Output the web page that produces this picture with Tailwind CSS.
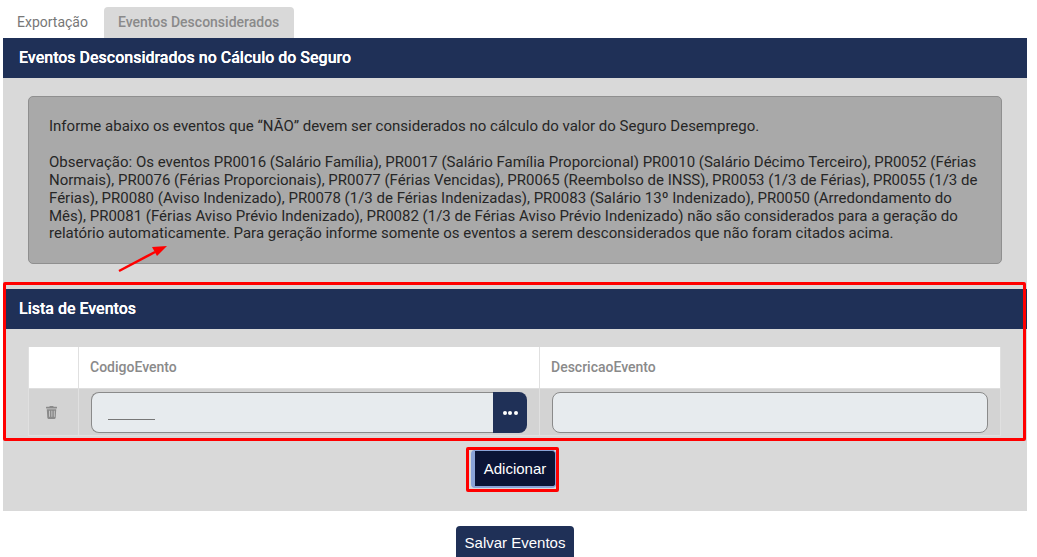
<!DOCTYPE html>
<html lang="pt"><head><meta charset="utf-8"><script src="https://cdn.jsdelivr.net/npm/@tailwindcss/browser@4"></script></head>
<body class="bg-white font-['Roboto',sans-serif] overflow-hidden">
<div class="relative w-[1037px] h-[557px] overflow-hidden pl-[3px]">
  <div class="flex h-[38px] items-end pl-px text-[14px]">
    <div class="h-[31px] px-[13px] flex items-center text-[#777]">Exportação</div>
    <div class="h-[31px] w-[190px] ml-[3px] px-[14px] flex items-center rounded-t-[4px] bg-[#d9d9d9] text-[#8a8a8a] font-medium">Eventos Desconsiderados</div>
  </div>
  <div class="w-[1024px] h-[473px] bg-[#d9d9d9]">
    <div class="h-[40px] bg-[#1f3057] text-white font-medium text-[16px] [text-shadow:0_0_0.6px_white] flex items-center pl-[16px]">Eventos Desconsidrados no Cálculo do Seguro</div>
    <div class="mt-[18px] mx-[25px] h-[168px] w-[974px] rounded-[5px] border border-[#8f8f8f] bg-[#a9a9a9] px-[20px] pt-[21px] text-[15px] leading-[17.800px] text-[#262626]">
      <p>Informe abaixo os eventos que “NÃO” devem ser considerados no cálculo do valor do Seguro Desemprego.</p>
      <p class="mt-[18.500px]">Observação: Os eventos PR0016 (Salário Família), PR0017 (Salário Família Proporcional) PR0010 (Salário Décimo Terceiro), PR0052 (Férias Normais), PR0076 (Férias Proporcionais), PR0077 (Férias Vencidas), PR0065 (Reembolso de INSS), PR0053 (1/3 de Férias), PR0055 (1/3 de Férias), PR0080 (Aviso Indenizado), PR0078 (1/3 de Férias Indenizadas), PR0083 (Salário 13º Indenizado), PR0050 (Arredondamento do Mês), PR0081 (Férias Aviso Prévio Indenizado), PR0082 (1/3 de Férias Aviso Prévio Indenizado) não são considerados para a geração do relatório automaticamente. Para geração informe somente os eventos a serem desconsiderados que não foram citados acima.</p>
    </div>
    <div class="mt-[25px] h-[40px] bg-[#1f3057] text-white font-medium text-[16px] [text-shadow:0_0_0.6px_white] flex items-center pl-[16px]">Lista de Eventos</div>
    <div class="mt-[18px] ml-[25px] w-[973px] border-x border-b border-[#e0e0e0] text-[14px]">
      <div class="grid grid-cols-[50px_461px_1fr] h-[42px] bg-white text-[#8a8a8a] font-medium border-b border-[#dedede]">
        <div class="border-r border-[#e0e0e0]"></div>
        <div class="border-r border-[#e0e0e0] pl-[11px] flex items-center">CodigoEvento</div>
        <div class="pl-[11px] flex items-center">DescricaoEvento</div>
      </div>
      <div class="grid grid-cols-[50px_461px_1fr] h-[46px] bg-[#d3d3d3]">
        <div class="border-r border-[#e0e0e0] flex items-center justify-center pr-[5px]">
          <svg class="w-[11px] h-[13px]" viewBox="0 0 448 512" fill="#8a8a8a" preserveAspectRatio="none"><path d="M432 32H312l-9.400-18.700A24 24 0 0 0 281.100 0H166.800a23.700 23.700 0 0 0-21.400 13.300L136 32H16A16 16 0 0 0 0 48v32a16 16 0 0 0 16 16h416a16 16 0 0 0 16-16V48a16 16 0 0 0-16-16zM53.200 467a48 48 0 0 0 47.900 45h245.800a48 48 0 0 0 47.900-45L416 128H32zM320 192a16 16 0 0 1 32 0v224a16 16 0 0 1-32 0zm-96 0a16 16 0 0 1 32 0v224a16 16 0 0 1-32 0zm-96 0a16 16 0 0 1 32 0v224a16 16 0 0 1-32 0z"/></svg>
        </div>
        <div class="border-r border-[#e0e0e0] pl-[12px] pt-[3px] flex items-start">
          <div class="relative w-[402px] h-[41px] bg-[#e7ebee] border border-[#8a8a8a] rounded-l-[8px] border-r-0">
            <div class="absolute left-[16px] top-[26px] w-[47px] border-b border-[#777]"></div>
          </div>
          <div class="w-[34px] h-[41px] shrink-0 bg-[#1f3057] rounded-r-[8px] flex items-center justify-center gap-[1.500px]">
            <span class="w-[4px] h-[4px] rounded-full bg-white"></span><span class="w-[4px] h-[4px] rounded-full bg-white"></span><span class="w-[4px] h-[4px] rounded-full bg-white"></span>
          </div>
        </div>
        <div class="pl-[12px] pt-[3px]"><div class="w-[436px] h-[41px] bg-[#e7ebee] border border-[#8a8a8a] rounded-[8px]"></div></div>
      </div>
    </div>
    <div class="flex mt-[14px] pl-[468px]">
      <button class="w-[85px] h-[38px] rounded-[4px] bg-[#0b1436] text-white text-[15px] font-['Liberation_Sans',sans-serif] border-l-[4px] border-t border-r border-b-[2px] border-[#8aa3d8] pt-[2px]">Adicionar</button>
    </div>
  </div>
  <div class="flex mt-[15px] pl-[453px]">
    <button class="w-[118px] h-[36px] rounded-[4px] bg-[#1f3057] text-white text-[15px] font-['Liberation_Sans',sans-serif] pb-[2px]">Salvar Eventos</button>
  </div>
  <div class="absolute left-[3px] top-[282px] w-[1023px] h-[159px] border-[3px] border-[#f00] rounded-[2px]"></div>
  <div class="absolute left-[466px] top-[447px] w-[93px] h-[45px] border-[3px] border-[#f00] rounded-[2px]"></div>
  <svg class="absolute left-[115px] top-[242px]" width="55" height="32" viewBox="0 0 55 32"><path d="M4 29 L40 10" stroke="#f00" stroke-width="2.500" fill="none"/><path d="M52 4 L37 5 L42 14 Z" fill="#f00"/></svg>
</div>
</body></html>
